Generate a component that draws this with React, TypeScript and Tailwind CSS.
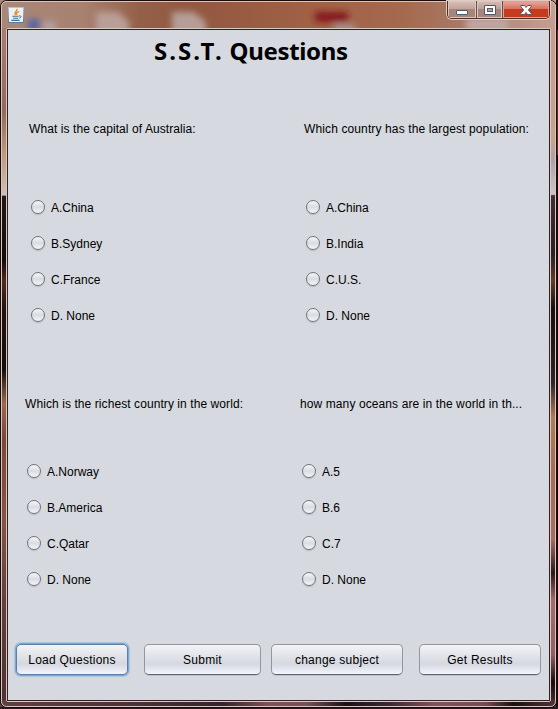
import { clsx } from "clsx";

type Question = {
  text: string;
  options: string[];
  textClass: string;
};

const topQuestions: Question[] = [
  { text: "What is the capital of Australia:", options: ["A.China", "B.Sydney", "C.France", "D. None"], textClass: "tracking-[0.08px]" },
  { text: "Which country has the largest population:", options: ["A.China", "B.India", "C.U.S.", "D. None"], textClass: "tracking-[0.12px]" },
];

const bottomQuestions: Question[] = [
  { text: "Which is the richest country in the world:", options: ["A.Norway", "B.America", "C.Qatar", "D. None"], textClass: "tracking-[0.08px]" },
  { text: "how many oceans are in the world in th...", options: ["A.5", "B.6", "C.7", "D. None"], textClass: "tracking-[0.1px]" },
];

function QuestionBlock({ question, gapClass }: { question: Question; gapClass: string }) {
  return (
    <div className={clsx("flex w-[275px] shrink-0 flex-col", gapClass)}>
      <p className={clsx("h-4 whitespace-nowrap leading-4", question.textClass)}>{question.text}</p>
      <div className="flex flex-col gap-5 pl-0.5">
        {question.options.map((option) => (
          <label key={option} className="flex h-4 items-center gap-1.5 whitespace-nowrap leading-4">
            <span className="h-3.5 w-3.5 shrink-0 rounded-full border border-[#70757d] bg-linear-to-b from-[#f6f7f9] via-[#d9dce2] to-[#f4f6fa] shadow-[0_1px_1px_#b4b8c1]" />
            <span className="pt-0.5">{option}</span>
          </label>
        ))}
      </div>
    </div>
  );
}

function PushButton({ label, className, focused }: { label: string; className: string; focused?: boolean }) {
  return (
    <button
      className={clsx(
        "h-[31px] shrink-0 whitespace-nowrap rounded-[5px] border bg-linear-to-b from-[#f3f4f6] from-0% via-[#d5d8e0] via-65% to-[#f2f5fc] to-100% pt-px text-center leading-[29px] tracking-[0.25px]",
        focused
          ? "border-[#5b7fa5] shadow-[0_0_0_1px_#7ba7d0,0_0_1px_2px_#a9c5df]"
          : "border-[#92969d] border-b-[#5d6269] shadow-[0_1px_0_#bfc2ca]",
        className,
      )}
    >
      {label}
    </button>
  );
}

function CoffeeIcon() {
  return (
    <svg width="16" height="16" viewBox="0 0 16 16" className="shrink-0">
      <defs>
        <linearGradient id="tile" x1="0" y1="0" x2="0" y2="1">
          <stop offset="0" stopColor="#b7c9d5" />
          <stop offset="1" stopColor="#527b97" />
        </linearGradient>
      </defs>
      <rect width="16" height="16" rx="1" fill="url(#tile)" />
      <rect x="1" y="1" width="14" height="14" fill="#eef1f3" />
      <path d="M9 1.8C10 4.2 5 5 7.6 8M11.2 4.3C8 5.4 8 6.2 9.2 8" fill="none" stroke="#f08423" strokeWidth="1.3" />
      <path d="M4.3 9.2h6.4M5.2 11.2h5M3.3 13.4h8.4" stroke="#426f91" strokeWidth="1.1" />
      <path d="M11 9c2.8-.8 2.6 1.6.2 2.1" fill="none" stroke="#426f91" />
    </svg>
  );
}

function WindowControls() {
  return (
    <div className="flex h-[18px] w-[103px] overflow-hidden rounded-b-[5px] border border-t-0 border-[#4b2f2b] shadow-[0_0_0_1px_#dfcac0]">
      <div className="flex w-[29px] justify-center border-r border-[#674d46] bg-linear-to-b from-[#d6c0b9] from-0% via-[#c3a49b] via-45% to-[#a98579] to-50% shadow-[inset_0_0_0_1px_#dcc8c1]">
        <svg width="12" height="16" viewBox="0 0 12 16">
          <rect x=".5" y="9.5" width="11" height="4" rx=".5" fill="#fff" stroke="#555966" />
        </svg>
      </div>
      <div className="flex w-[26px] justify-center border-r border-[#674d46] bg-linear-to-b from-[#d2beb9] from-0% via-[#bca19b] via-45% to-[#a5867d] to-50% shadow-[inset_0_0_0_1px_#dcc8c1]">
        <svg width="12" height="16" viewBox="0 0 12 16">
          <path d="M.5 4.5h11v9H.5z" fill="#fff" stroke="#555966" />
          <rect x="3.5" y="7.5" width="5" height="3" fill="#b39f9b" stroke="#555966" />
        </svg>
      </div>
      <div className="flex flex-1 justify-center bg-linear-to-b from-[#e9aaa0] from-0% via-[#d8725f] via-45% to-[#c63a20] to-50% shadow-[inset_0_0_0_1px_#e69c8c]">
        <svg width="12" height="16" viewBox="0 0 12 16">
          <path d="M.8 4.5h3.6L6 6.5l1.6-2h3.6v1.3L8.3 9l2.9 3.2v1.3H7.6L6 11.5l-1.6 2H.8v-1.3L3.7 9 .8 5.8z" fill="#fff" stroke="#555966" />
        </svg>
      </div>
    </div>
  );
}

/* Blurred desktop shapes showing through the translucent title bar and borders. */
function GlassBackdrop() {
  return (
    <svg className="absolute inset-0" width="558" height="709" viewBox="0 0 558 709">
      <defs>
        <filter id="soft" x="-30%" y="-30%" width="160%" height="160%">
          <feGaussianBlur stdDeviation="3" />
        </filter>
        <linearGradient id="bar">
          <stop offset="0" stopColor="#a98779" />
          <stop offset=".15" stopColor="#a8816f" />
          <stop offset=".25" stopColor="#946048" />
          <stop offset=".35" stopColor="#925840" />
          <stop offset=".55" stopColor="#a06145" />
          <stop offset=".72" stopColor="#a5694d" />
          <stop offset=".82" stopColor="#a77863" />
          <stop offset="1" stopColor="#c7a092" />
        </linearGradient>
        <linearGradient id="left" gradientUnits="userSpaceOnUse" x1="0" y1="30" x2="0" y2="709">
          <stop offset="0" stopColor="#a57e71" />
          <stop offset=".12" stopColor="#94695d" />
          <stop offset=".18" stopColor="#c09676" />
          <stop offset=".243" stopColor="#ccbfba" />
          <stop offset=".245" stopColor="#241818" />
          <stop offset=".34" stopColor="#120c0c" />
          <stop offset=".37" stopColor="#512a20" />
          <stop offset=".41" stopColor="#24130f" />
          <stop offset=".5" stopColor="#120e0e" />
          <stop offset=".55" stopColor="#9a6b4c" />
          <stop offset=".6" stopColor="#7a4839" />
          <stop offset=".72" stopColor="#855445" />
          <stop offset=".84" stopColor="#633f3d" />
          <stop offset="1" stopColor="#4e3033" />
        </linearGradient>
        <linearGradient id="right" gradientUnits="userSpaceOnUse" x1="0" y1="30" x2="0" y2="709">
          <stop offset="0" stopColor="#c49d91" />
          <stop offset=".16" stopColor="#c6a48f" />
          <stop offset=".19" stopColor="#aba0a7" />
          <stop offset=".242" stopColor="#cbc7cc" />
          <stop offset=".244" stopColor="#412d39" />
          <stop offset=".33" stopColor="#2a2029" />
          <stop offset=".37" stopColor="#623c28" />
          <stop offset=".41" stopColor="#15100f" />
          <stop offset=".52" stopColor="#30242d" />
          <stop offset=".57" stopColor="#ad7d55" />
          <stop offset=".65" stopColor="#aa6b54" />
          <stop offset=".75" stopColor="#a66c66" />
          <stop offset=".8" stopColor="#2a1819" />
          <stop offset=".84" stopColor="#a76b6b" />
          <stop offset=".92" stopColor="#925e65" />
          <stop offset=".96" stopColor="#160c11" />
          <stop offset="1" stopColor="#53353e" />
        </linearGradient>
        <linearGradient id="base">
          <stop offset="0" stopColor="#633f42" />
          <stop offset=".25" stopColor="#493039" />
          <stop offset=".4" stopColor="#34232e" />
          <stop offset=".48" stopColor="#80515a" />
          <stop offset=".55" stopColor="#765058" />
          <stop offset=".62" stopColor="#171218" />
          <stop offset=".7" stopColor="#3d2936" />
          <stop offset=".78" stopColor="#86525b" />
          <stop offset=".87" stopColor="#754b50" />
          <stop offset=".92" stopColor="#1a1012" />
          <stop offset="1" stopColor="#53353e" />
        </linearGradient>
      </defs>
      <rect width="558" height="709" fill="#120d0f" />
      <rect width="558" height="30" fill="url(#bar)" />
      <rect y="28" width="8" height="681" fill="url(#left)" />
      <rect x="549" y="28" width="9" height="681" fill="url(#right)" />
      <rect y="700" width="558" height="9" fill="url(#base)" />
      <g filter="url(#soft)">
        <rect x="28" y="19" width="12" height="12" fill="#5965a5" />
        <path d="M43 21h13v12H43z" fill="#b29fa0" />
        <path d="M96 12h22l11 10v12H96z" fill="#b99f98" />
        <path d="M172 12h22l12 10v12h-34z" fill="#b69d98" />
        <path d="M334 24h18l8 8h-26z" fill="#ae9290" />
        <rect x="315" y="12" width="33" height="10" fill="#86181e" />
        <rect x="466" y="18" width="42" height="14" fill="#bda6a2" />
      </g>
      <rect x="556" width="2" height="709" fill="#130d0c" />
      <rect x="556" y="30" width="2" height="125" fill="#523925" />
      <rect y="707" width="558" height="2" fill="#291b22" />
      <rect x=".5" y=".5" width="556" height="707" rx="6" fill="none" stroke="#170b0b" />
      <rect x="1.5" y="1.5" width="554" height="705" rx="5" fill="none" stroke="#d9c5bd" />
    </svg>
  );
}

export default function App() {
  return (
    <div className="relative h-[709px] w-[558px] overflow-hidden font-['Liberation_Sans',Arial,sans-serif] text-xs text-black">
      <GlassBackdrop />
      <div className="relative flex h-full flex-col pr-2 pl-1.5">
        <header className="flex h-7 shrink-0 items-start justify-between pl-0.5">
          <div className="pt-[7px]">
            <CoffeeIcon />
          </div>
          <div className="pt-px">
            <WindowControls />
          </div>
        </header>
        <main className="flex h-[674px] w-[545px] shrink-0 flex-col rounded-xs border border-[#d8c9c3]">
          <div className="flex h-full flex-col border border-[#30201f] bg-[#d6d9df]">
            <h1 className="h-[91px] pt-[5px] pl-[146px] font-['Noto_Sans',sans-serif] text-2xl leading-8 font-bold whitespace-nowrap">
              <span className="tracking-[2.05px]">S.S.T.</span>
              <span className="tracking-[-0.35px]"> Questions</span>
            </h1>
            <section className="flex h-[275px] shrink-0 pl-[21px]">
              {topQuestions.map((q) => (
                <QuestionBlock key={q.text} question={q} gapClass="gap-[62px]" />
              ))}
            </section>
            <section className="flex h-[248px] shrink-0 pl-[17px]">
              {bottomQuestions.map((q) => (
                <QuestionBlock key={q.text} question={q} gapClass="gap-[51px]" />
              ))}
            </section>
            <footer className="flex pl-2">
              <PushButton label="Load Questions" className="w-28" focused />
              <PushButton label="Submit" className="ml-4 w-[117px]" />
              <PushButton label="change subject" className="ml-2.5 w-[132px]" />
              <PushButton label="Get Results" className="ml-4 w-[122px]" />
            </footer>
          </div>
        </main>
      </div>
    </div>
  );
}
